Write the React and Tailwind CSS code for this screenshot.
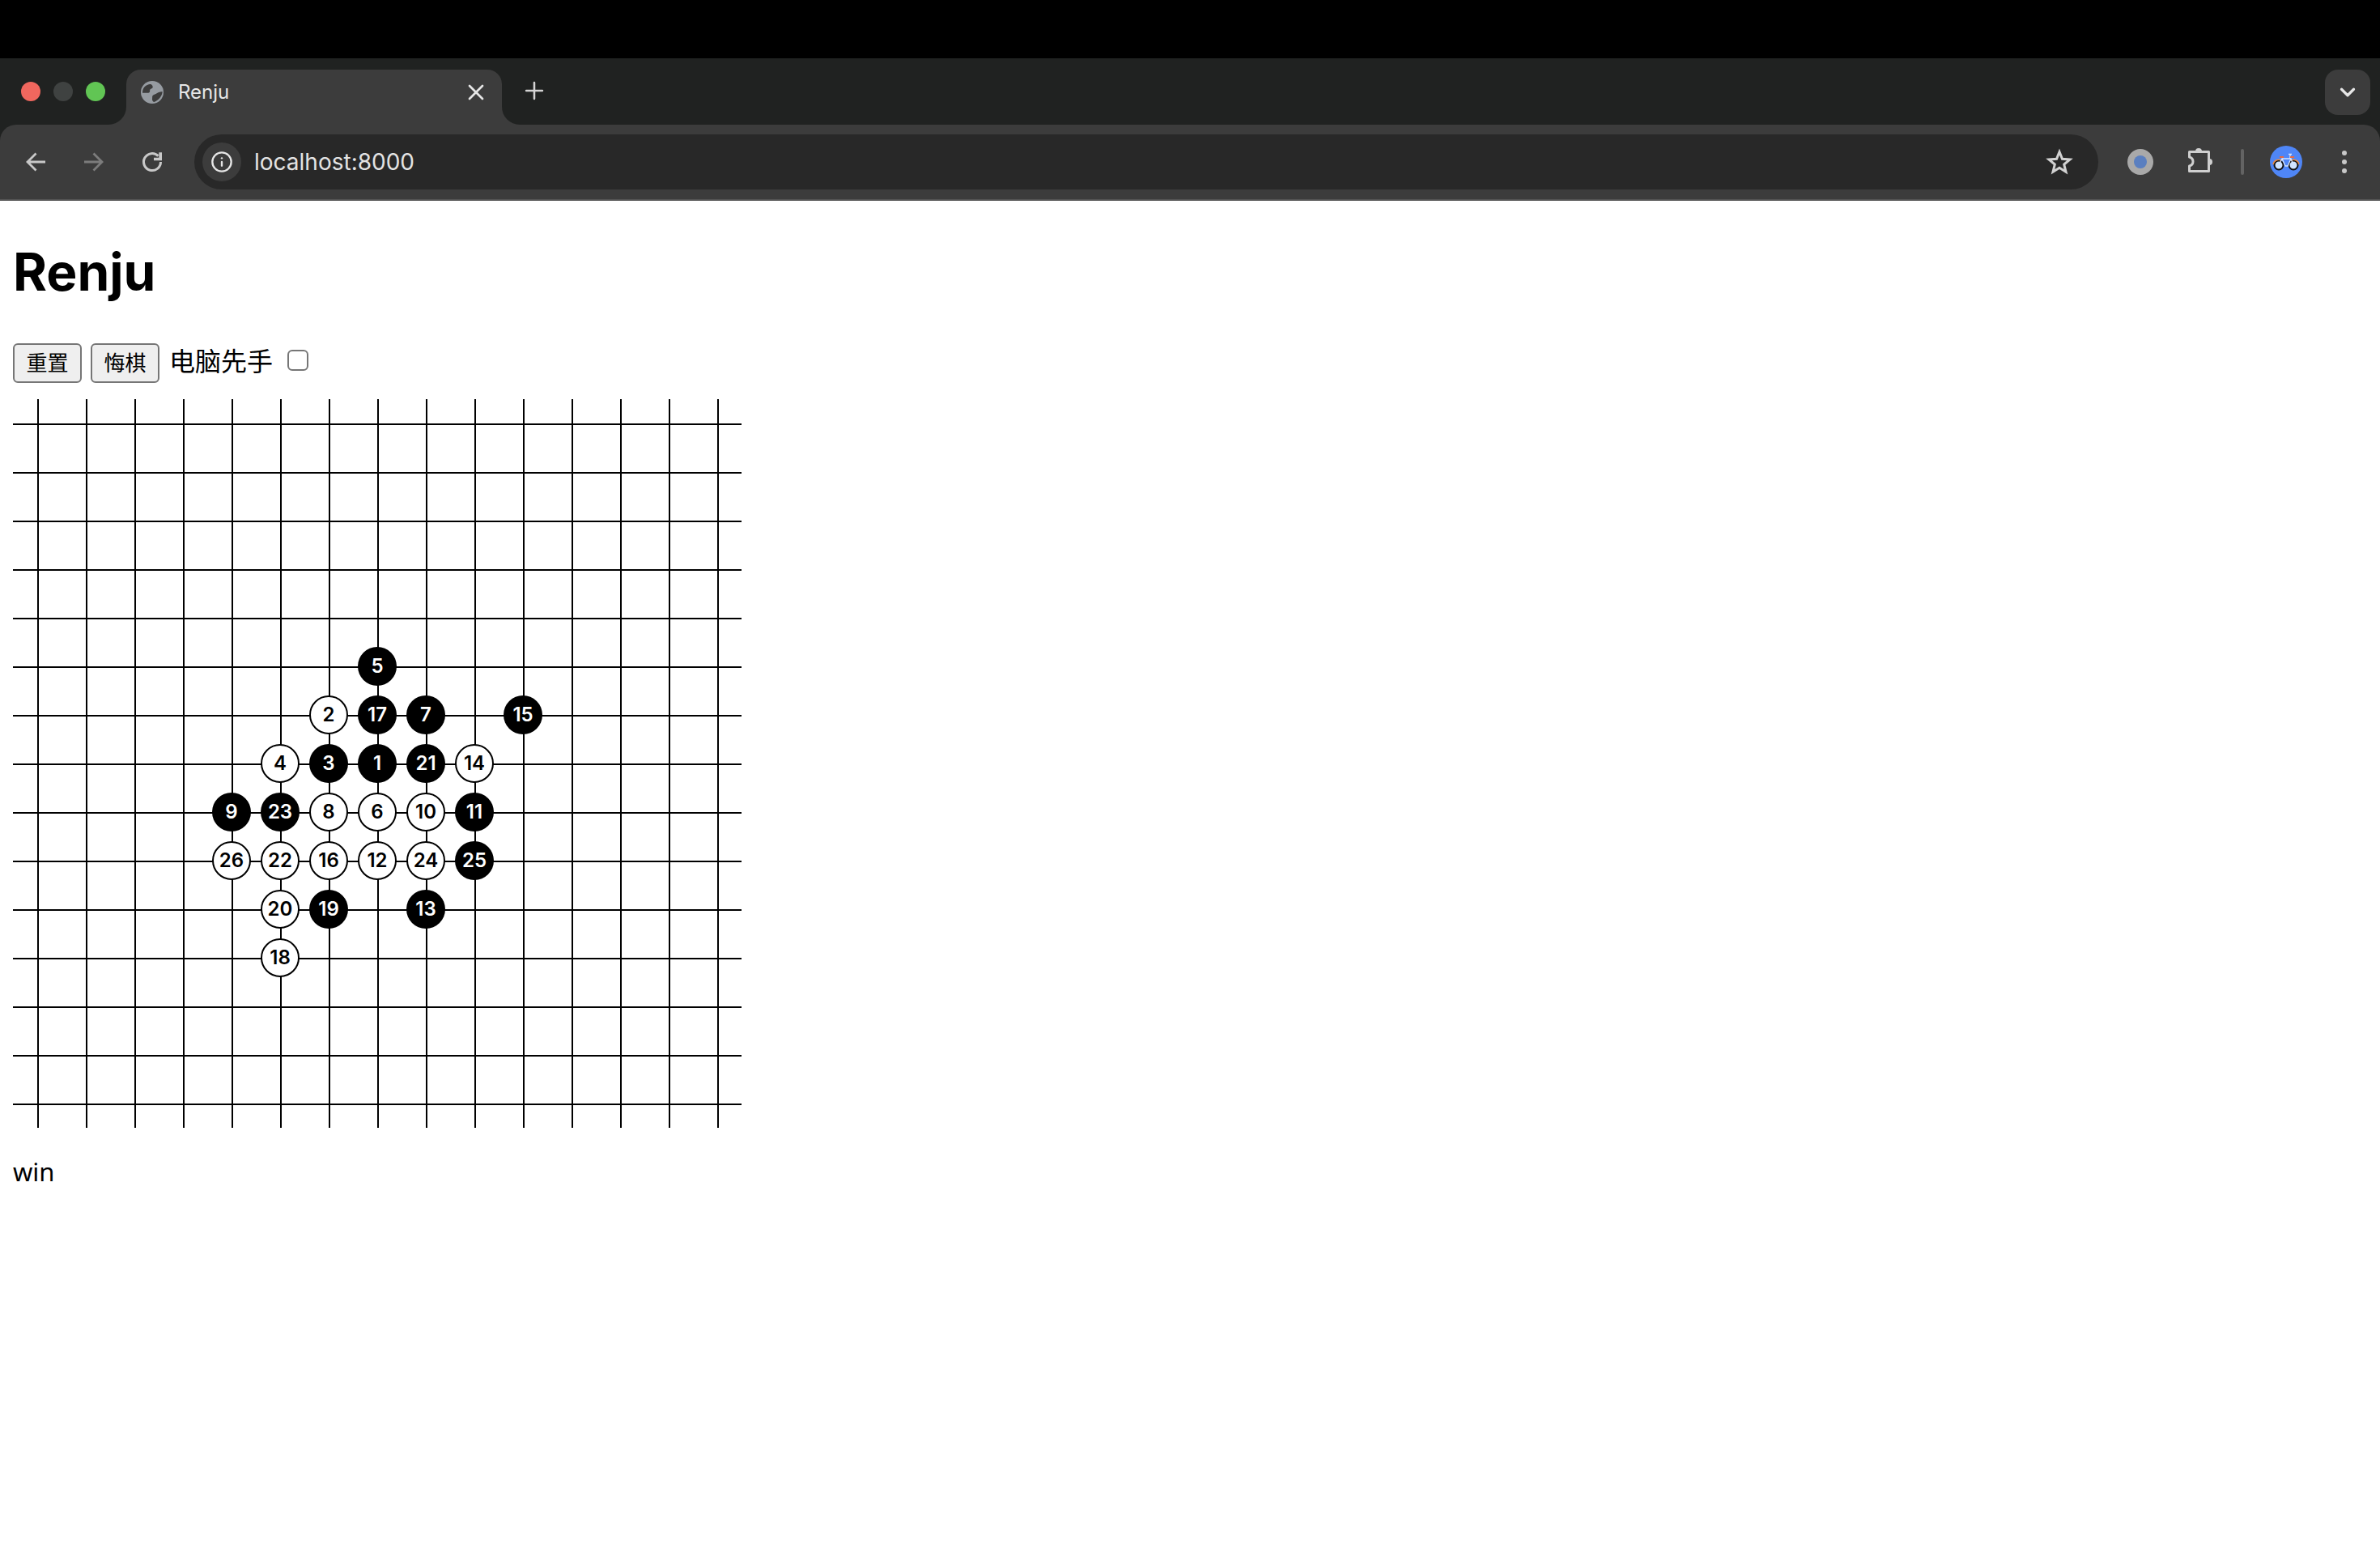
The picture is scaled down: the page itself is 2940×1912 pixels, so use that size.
import React from 'react';
import { Info, ChevronDown, X, Plus } from 'lucide-react';

// move number -> [row, col]
const moves = {
    1: [7, 7], 2: [6, 6], 3: [7, 6], 4: [7, 5], 5: [5, 7], 6: [8, 7], 7: [6, 8], 8: [8, 6], 9: [8, 4],
    10: [8, 8], 11: [8, 9], 12: [9, 7], 13: [10, 8], 14: [7, 9], 15: [6, 10], 16: [9, 6], 17: [6, 7],
    18: [11, 5], 19: [10, 6], 20: [10, 5], 21: [7, 8], 22: [9, 5], 23: [8, 5], 24: [9, 8], 25: [9, 9], 26: [9, 4],
};

const stoneAt = {};
Object.entries(moves).forEach(([n, [r, c]]) => {
    stoneAt[`${r}-${c}`] = Number(n);
});

const Globe = () => (
    <svg width="28" height="28" viewBox="0 0 28 28" className="shrink-0">
        <circle cx="14" cy="14" r="14" fill="#969ba1" />
        <path
            d="M2 14.700C2 12 2.500 10.500 3.300 9 4.500 7.300 5.500 6 7.300 5.300 9 4.500 10.500 4 12.300 4 14 5 15 6.500 14.700 8 14 9.500 12 9.500 11.300 10.700 10.800 12 11.500 13 10.700 14 9 15.300 7.500 14.700 6.700 14.700 5 14.700 3.500 15 2 14.700Z"
            fill="#3c3c3c"
        />
        <path
            d="M26.700 13.300C26.500 15.500 25.800 17.500 24.700 19 23.500 21 22 22.800 20 24 18.500 25 17.500 25.600 16 26 14.500 25 13.800 23.800 14 22.300 14.300 20.500 13.800 19 14.700 18 15.800 16.500 17.500 16.500 19 15.700 20.500 14.800 21 14.500 22.300 14 23.800 13.500 25 13 26.700 13.300Z"
            fill="#3c3c3c"
        />
    </svg>
);

const BackIcon = () => (
    <svg width="24" height="24" viewBox="0 0 24 24" fill="none" stroke="#c8c8c8" strokeWidth="2.800">
        <path d="M24 12H2.500M12.500 1.500 2 12l10.500 10.500" />
    </svg>
);

const ForwardIcon = () => (
    <svg width="24" height="24" viewBox="0 0 24 24" fill="none" stroke="#7c7c7c" strokeWidth="2.800">
        <path d="M0 12H21.500M11.500 1.500 22 12 11.500 22.500" />
    </svg>
);

const ReloadIcon = () => (
    <svg width="32" height="32" viewBox="0 0 32 32" fill="none">
        <path d="M26.500 16A10.500 10.500 0 1 1 23.400 8.600" stroke="#c8c8c8" strokeWidth="3" />
        <path d="M28 4.300V14.300H18V10.700H24.300V4.300Z" fill="#c8c8c8" />
    </svg>
);

const StarIcon = () => (
    <svg width="34" height="34" viewBox="0 0 34 34" fill="none" stroke="#d2d2d2" strokeWidth="3" strokeLinejoin="miter">
        <path d="M17 4.500 20.500 13.300 30 14 22.700 20 25 29.300 17 24.200 9 29.300 11.300 20 4 14 13.500 13.300Z" />
    </svg>
);

const ExtensionIcon = () => (
    <svg width="48" height="48" viewBox="0 0 48 48" fill="none" className="shrink-0">
        <path
            d="M9.500 11.500H33.500V35.500H9.500V29C13 28 14 26 14 23.500 14 21 13 19 9.500 18Z"
            stroke="#cfcfcf"
            strokeWidth="3"
            strokeLinejoin="round"
        />
        <path d="M17 11A4 4 0 0 1 25 11ZM34 20A4 4 0 0 1 34 28Z" fill="#cfcfcf" />
    </svg>
);

const Bike = () => (
    <svg width="40" height="40" viewBox="0 0 40 40" className="shrink-0">
        <circle cx="20" cy="20" r="20" fill="#4f86f7" />
        <circle cx="11" cy="24" r="5.500" fill="#cfe3ff" stroke="#111" strokeWidth="2" />
        <circle cx="29" cy="24" r="5.500" fill="#cfe3ff" stroke="#111" strokeWidth="2" />
        <path d="M4 23a7 7 0 0 1 10-5M26 18a7 7 0 0 1 10 5" fill="none" stroke="#e8893f" strokeWidth="1.500" />
        <path d="M11 24 15 16H26L29 24M15 16 19 25H22L26 16M25 11V16" fill="none" stroke="#d6e6ff" strokeWidth="1.300" />
        <path d="M12 13h5v2h-5zM25 13h5v2h-5z" fill="#e8693f" />
        <path d="M23 10.500h4" stroke="#d6e6ff" strokeWidth="1.500" />
    </svg>
);

const App = () => {
    const cells = [];
    for (let r = 0; r < 15; r++) {
        for (let c = 0; c < 15; c++) {
            const n = stoneAt[`${r}-${c}`];
            cells.push(
                <div
                    key={`${r}-${c}`}
                    className="w-[60px] h-[60px] flex items-center justify-center bg-no-repeat bg-[linear-gradient(#000,#000),linear-gradient(#000,#000)] bg-[size:2px_100%,100%_2px] bg-[position:30px_0,0_30px]"
                >
                    {n && (
                        <div
                            className={`w-[48px] h-[48px] rounded-full flex items-center justify-center text-[24px] font-semibold font-['Inter',sans-serif] ${
                                n % 2 ? 'bg-black text-white' : 'bg-white text-black border-2 border-black'
                            }`}
                        >
                            {n}
                        </div>
                    )}
                </div>
            );
        }
    }

    return (
        <div className="w-[2940px] h-[1912px] bg-white overflow-hidden">
            {/* macOS black bar */}
            <div className="h-[72px] bg-black" />

            {/* Tab strip: the gray behind shows through the flared corners of the tab */}
            <div className="h-[82px] bg-[#3c3c3c] flex">
                <div className="w-[156px] h-full bg-[#202221] rounded-br-[22px] flex items-start gap-[16px] pt-[29px] pl-[26px]">
                    <span className="w-[24px] h-[24px] rounded-full bg-[#f0675e]" />
                    <span className="w-[24px] h-[24px] rounded-full bg-[#3f4241]" />
                    <span className="w-[24px] h-[24px] rounded-full bg-[#61c554]" />
                </div>
                <div className="w-[464px] h-full bg-[#202221]">
                    <div className="h-[68px] mt-[14px] bg-[#3c3c3c] rounded-t-[18px] flex items-start pl-[18px] pr-[16px] pt-[14px] gap-[18px] text-[#e6e6e6] text-[24px] font-['Inter',sans-serif]">
                        <Globe />
                        <span className="flex-1 leading-[28px]">Renju</span>
                        <X size={32} strokeWidth={2} className="-mt-[2px]" />
                    </div>
                </div>
                <div className="flex-1 h-full bg-[#202221] rounded-bl-[22px] flex justify-between items-start pt-[14px] pr-[12px]">
                    <Plus size={34} strokeWidth={1.800} className="text-[#d4d4d4] ml-[23px] mt-[9px]" />
                    <div className="w-[56px] h-[56px] rounded-[16px] bg-[#3c3c3c] flex items-center justify-center">
                        <ChevronDown size={30} strokeWidth={2.600} className="text-[#e6e6e6]" />
                    </div>
                </div>
            </div>

            {/* Toolbar */}
            <div className="bg-[#202221]">
                <div className="h-[92px] bg-[#3c3c3c] rounded-t-[20px] flex items-center">
                    <div className="w-[240px] flex items-center pl-[32px] shrink-0">
                        <BackIcon />
                        <div className="ml-[48px]">
                            <ForwardIcon />
                        </div>
                        <div className="ml-[44px]">
                            <ReloadIcon />
                        </div>
                    </div>
                    <div className="w-[2352px] h-[68px] bg-[#282828] rounded-full flex items-center pl-[10px] pr-[31px] shrink-0">
                        <div className="w-[48px] h-[48px] rounded-full bg-[#3c3c3c] flex items-center justify-center">
                            <Info size={28} strokeWidth={2} className="text-[#e6e6e6]" />
                        </div>
                        <span className="ml-[16px] flex-1 text-[28px] text-[#e3e3e3] font-['Inter',sans-serif]">localhost:8000</span>
                        <StarIcon />
                    </div>
                    <div className="flex items-center flex-1 pl-[36px]">
                        <div className="w-[32px] h-[32px] rounded-full bg-[#a9a9a9] flex items-center justify-center shrink-0">
                            <div className="w-[16px] h-[16px] rounded-full bg-[#5a7fc0]" />
                        </div>
                        <div className="ml-[35px]">
                            <ExtensionIcon />
                        </div>
                        <div className="w-[4px] h-[32px] rounded-full bg-[#636363] ml-[25px] shrink-0" />
                        <div className="ml-[32px]">
                            <Bike />
                        </div>
                        <div className="ml-[49px] flex flex-col gap-[5px]">
                            <span className="w-[6px] h-[6px] rounded-full bg-[#c8c8c8]" />
                            <span className="w-[6px] h-[6px] rounded-full bg-[#c8c8c8]" />
                            <span className="w-[6px] h-[6px] rounded-full bg-[#c8c8c8]" />
                        </div>
                    </div>
                </div>
            </div>
            <div className="h-[2px] bg-[#555555]" />

            {/* Page */}
            <div className="pl-[16px]">
                <h1 className="mt-[51px] text-[64px] leading-[74px] font-bold text-black font-['Inter',sans-serif]">Renju</h1>
                <div className="mt-[51px] h-[49px] flex items-center text-[32px] text-black font-['Liberation_Sans','Noto_Sans_CJK_SC',sans-serif]">
                    <button className="w-[85px] h-[49px] bg-[#efefef] border-2 border-[#767676] rounded-[6px] text-[26px] leading-none">重置</button>
                    <button className="w-[85px] h-[49px] ml-[11px] bg-[#efefef] border-2 border-[#767676] rounded-[6px] text-[26px] leading-none">悔棋</button>
                    <span className="ml-[12px] -mt-[4px] leading-none">电脑先手</span>
                    <span className="w-[26px] h-[26px] ml-[18px] -mt-[7px] bg-white border-2 border-[#767676] rounded-[6px]" />
                </div>
                <div className="mt-[20px] grid grid-cols-[repeat(15,60px)] w-[900px]">{cells}</div>
                <div className="mt-[30px] text-[31px] leading-[48px] text-black font-['Noto_Sans',sans-serif]">win</div>
            </div>
        </div>
    );
};

export default App;
